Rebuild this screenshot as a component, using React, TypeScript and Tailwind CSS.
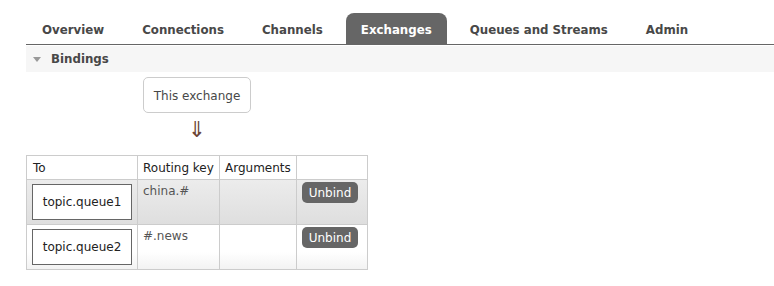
import React from "react";

const tabs = ["Overview", "Connections", "Channels", "Exchanges", "Queues and Streams", "Admin"];

const bindings = [
  { queue: "topic.queue1", key: "china.#", alt: true },
  { queue: "topic.queue2", key: "#.news", alt: false },
];

export default function App() {
  return (
    <div
      className="w-[774px] h-[286px] bg-white text-[#484848] overflow-hidden"
      style={{ fontFamily: '"DejaVu Sans", Verdana, sans-serif' }}
    >
      <div className="ml-[26px] pt-[13px]">
        {/* Tabs */}
        <div className="flex h-[32px] border-b border-[#666] pl-px gap-[8px]">
          {tabs.map((t) => (
            <div
              key={t}
              className={`flex items-center px-[15px] pt-[4px] text-[11.8px] font-bold rounded-t-[8px] ${
                t === "Exchanges" ? "bg-[#666] text-white" : "text-[#484848]"
              }`}
            >
              {t}
            </div>
          ))}
        </div>

        {/* Section header */}
        <div className="flex items-center h-[26px] bg-[#f6f6f6] mt-px pt-px">
          <span className="ml-[7px] w-0 h-0 border-l-[4px] border-r-[4px] border-t-[5px] border-l-transparent border-r-transparent border-t-[#999]" />
          <span className="ml-[10px] text-[11.8px] font-bold text-[#484848]">Bindings</span>
        </div>

        {/* This exchange */}
        <div className="ml-[117px] mt-[5px] w-[108px] flex flex-col items-center">
          <div className="w-[108px] h-[36px] pt-px border border-[#ccc] rounded-[5px] flex items-center justify-center text-[12px] text-[#484848]">
            This exchange
          </div>
          <div className="mt-[5px] text-[22px] leading-[24px] text-[#6b4536]">⇓</div>
        </div>

        {/* Table */}
        <table className="mt-[13px] border-collapse text-[12px] text-[#222]">
          <thead>
            <tr className="h-[24px]">
              <th className="w-[111px] border border-[#ccc] font-normal text-left px-[6px] align-middle">To</th>
              <th className="w-[82px] border border-[#ccc] font-normal text-left px-[5px] align-middle">Routing key</th>
              <th className="w-[77px] border border-[#ccc] font-normal text-left px-[5px] align-middle">Arguments</th>
              <th className="w-[71px] border border-[#ccc]" />
            </tr>
          </thead>
          <tbody>
            {bindings.map((b) => (
              <tr
                key={b.queue}
                className={`h-[45px] ${
                  b.alt
                    ? "bg-[linear-gradient(#ececec,#dedede)]"
                    : "bg-[linear-gradient(#ffffff,#ffffff_60%,#f2f2f2)]"
                }`}
              >
                <td className="border border-[#ccc] px-[5px] align-middle">
                  <div className="w-[100px] h-[36px] border border-[#666] bg-white flex items-center justify-center text-[12px] text-[#222]">
                    {b.queue}
                  </div>
                </td>
                <td className="border border-[#ccc] px-[5px] pt-[2px] align-top text-[#555]">{b.key}</td>
                <td className="border border-[#ccc]" />
                <td className="border border-[#ccc] px-[5px] pt-[2px] align-top">
                  <div className="w-[56px] h-[21px] rounded-[5px] bg-[#666] text-white flex items-center justify-center text-[12px]">
                    Unbind
                  </div>
                </td>
              </tr>
            ))}
          </tbody>
        </table>
      </div>
    </div>
  );
}
